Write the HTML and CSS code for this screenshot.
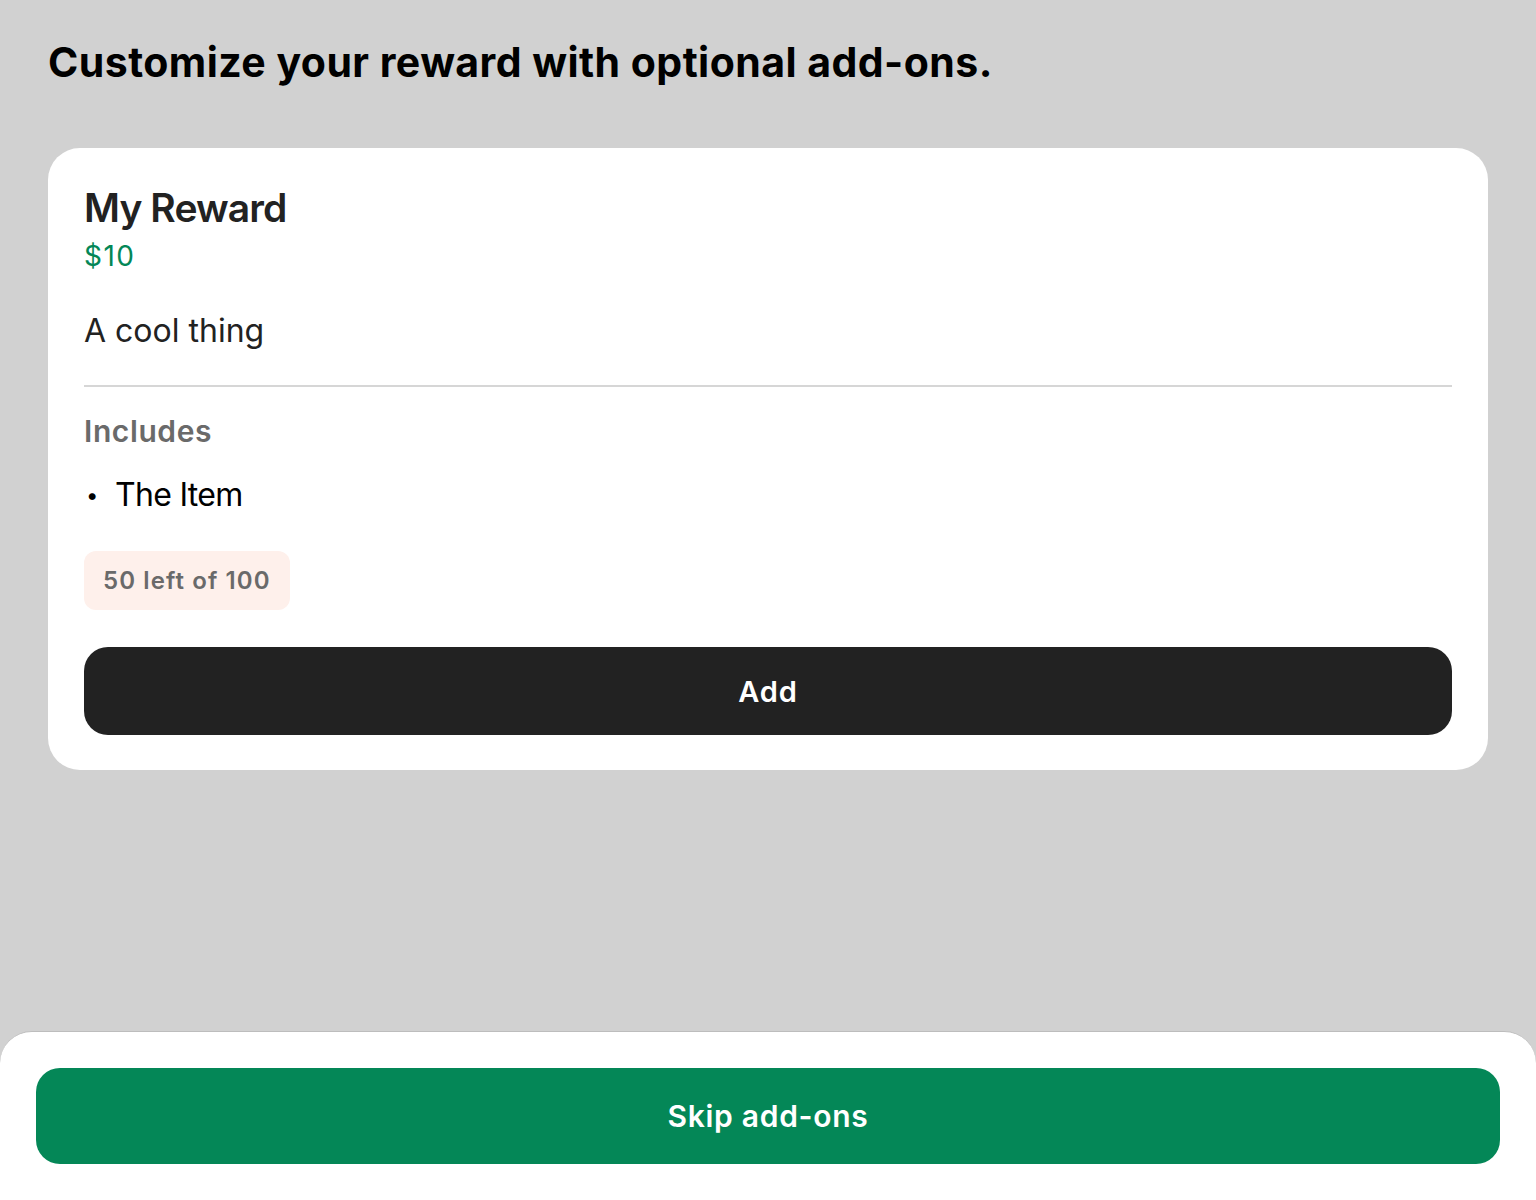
FILE: index.html
```html
<!DOCTYPE html>
<html lang="en">
<head>
<meta charset="utf-8">
<title>Add-ons</title>
<link rel="stylesheet" href="styles.css">
</head>
<body>
<div class="page">
  <main class="content">
    <h1 class="title">Customize your reward with optional add-ons.</h1>
    <section class="card">
      <h2 class="reward-name">My Reward</h2>
      <div class="reward-price">$10</div>
      <p class="reward-desc">A cool thing</p>
      <hr class="divider">
      <h3 class="includes-title">Includes</h3>
      <ul class="includes-list">
        <li class="includes-item"><span class="bullet">•</span><span>The Item</span></li>
      </ul>
      <div class="badge">50 left of 100</div>
      <button class="btn btn-dark">Add</button>
    </section>
  </main>
  <footer class="sheet">
    <button class="btn btn-green">Skip add-ons</button>
  </footer>
</div>
</body>
</html>
```

FILE: styles.css
```css
* { box-sizing: border-box; }
html, body { margin: 0; padding: 0; }
body {
  background: #d1d1d1;
  font-family: Inter, "Noto Sans", "Liberation Sans", sans-serif;
  color: #222222;
}
.page {
  min-height: 1200px;
  display: flex;
  flex-direction: column;
}
.content {
  padding: 38px 48px 0 48px;
}
.title {
  margin: 0;
  font-size: 41px;
  line-height: 48px;
  font-weight: 700;
  color: #000000;
  letter-spacing: 0.45px;
}
.card {
  margin-top: 62px;
  background: #ffffff;
  border-radius: 32px;
  padding: 36px 36px 35px 36px;
  display: flex;
  flex-direction: column;
}
.reward-name {
  margin: 0;
  font-size: 39px;
  line-height: 48px;
  font-weight: 600;
  color: #222222;
  letter-spacing: -0.9px;
}
.reward-price {
  margin-top: 6px;
  font-size: 28px;
  line-height: 36px;
  color: #038757;
  letter-spacing: 1.5px;
}
.reward-desc {
  margin: 37px 0 0 0;
  font-size: 32px;
  line-height: 40px;
  color: #222222;
}
.divider {
  margin: 34px 0 0 0;
  border: none;
  height: 2px;
  background: #d6d6d6;
}
.includes-title {
  margin: 26px 0 0 0;
  font-size: 30px;
  line-height: 36px;
  font-weight: 600;
  color: #6a6a6a;
  letter-spacing: 0.6px;
}
.includes-list {
  list-style: none;
  margin: 26px 0 0 0;
  padding: 0;
}
.includes-item {
  display: flex;
  align-items: center;
  font-size: 32px;
  line-height: 40px;
  color: #000000;
  letter-spacing: -0.7px;
}
.bullet {
  width: 31px;
  padding-left: 2px;
  font-size: 22px;
}
.badge {
  align-self: flex-start;
  margin-top: 36px;
  height: 59px;
  padding: 0 19px;
  display: flex;
  align-items: center;
  background: #fef0eb;
  border-radius: 12px;
  font-size: 24px;
  font-weight: 600;
  color: #6a6a6a;
  letter-spacing: 1.1px;
}
.btn {
  display: flex;
  align-items: center;
  justify-content: center;
  width: 100%;
  border: none;
  font-family: inherit;
  font-weight: 600;
  color: #ffffff;
  cursor: pointer;
}
.btn-dark {
  margin-top: 37px;
  height: 88px;
  border-radius: 24px;
  background: #222222;
  font-size: 29px;
  letter-spacing: 0.8px;
}
.sheet {
  margin-top: auto;
  background: #ffffff;
  border-top: 1px solid #bdbdbd;
  border-radius: 32px 32px 0 0;
  padding: 36px;
}
.btn-green {
  height: 96px;
  border-radius: 24px;
  background: #048757;
  font-size: 30px;
  letter-spacing: 0.7px;
}
```
